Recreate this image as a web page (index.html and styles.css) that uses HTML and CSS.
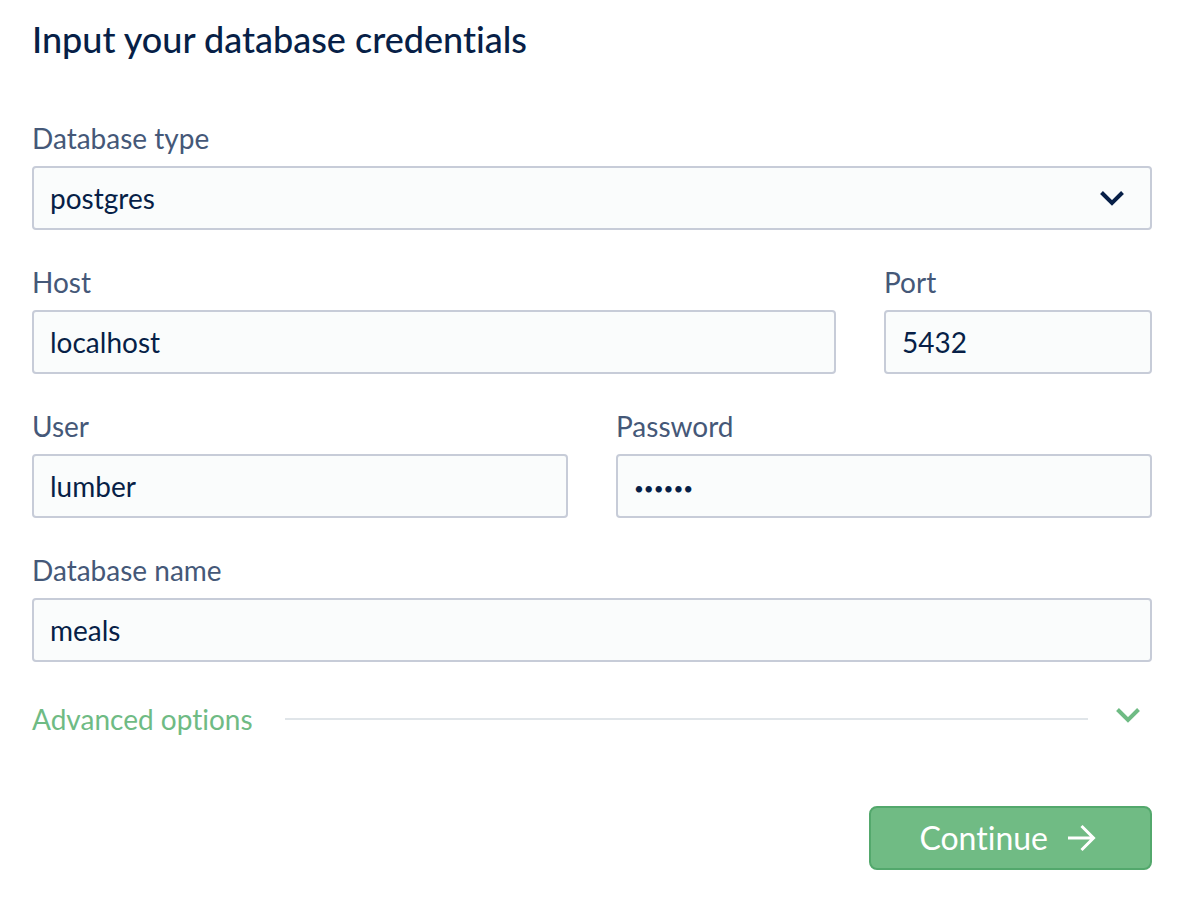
FILE: index.html
```html
<!DOCTYPE html>
<html lang="en">
<head>
<meta charset="utf-8">
<meta name="viewport" content="width=device-width, initial-scale=1">
<title>Database credentials</title>
<link rel="stylesheet" href="styles.css">
</head>
<body>
<main class="page">
  <h1 class="title">Input your database credentials</h1>
  <form class="form">
    <div class="field">
      <label class="label" for="type">Database type</label>
      <div class="select">
        <select class="control" id="type"><option>postgres</option><option>mysql</option></select>
        <svg class="select-icon" width="24" height="16" viewBox="0 0 24 16" aria-hidden="true"><path d="M1.5 2.5 12 13 22.5 2.5"/></svg>
      </div>
    </div>
    <div class="row row-host">
      <div class="field">
        <label class="label" for="host">Host</label>
        <input class="control" id="host" type="text" value="localhost">
      </div>
      <div class="field">
        <label class="label" for="port">Port</label>
        <input class="control" id="port" type="text" inputmode="numeric" value="5432">
      </div>
    </div>
    <div class="row">
      <div class="field">
        <label class="label" for="user">User</label>
        <input class="control" id="user" type="text" value="lumber">
      </div>
      <div class="field">
        <label class="label" for="password">Password</label>
        <input class="control control-password" id="password" type="password" value="lumber">
      </div>
    </div>
    <div class="field">
      <label class="label" for="name">Database name</label>
      <input class="control" id="name" type="text" value="meals">
    </div>
    <button class="advanced" type="button" aria-expanded="false">
      <span>Advanced options</span>
      <span class="line"></span>
      <svg class="advanced-icon" width="24" height="16" viewBox="0 0 24 16" aria-hidden="true"><path d="M1.5 2.5 12 13 22.5 2.5"/></svg>
    </button>
    <button class="continue" type="submit">
      <span>Continue</span>
      <svg class="arrow" width="28" height="28" viewBox="0 0 28 28" aria-hidden="true"><path d="M0 14H26M13.5 2 25.5 14 13.5 26"/></svg>
    </button>
  </form>
</main>
</body>
</html>
```
FILE: styles.css
```css
* {
  box-sizing: border-box;
}

body {
  margin: 0;
  background: #fff;
  color: #071f47;
  font-family: Lato, "Liberation Sans", sans-serif;
  font-size: 28px;
  font-variant-ligatures: none;
}

.page {
  padding: 16px 28px 36px 32px;
}

.title {
  margin: 0 0 60px;
  font-size: 36px;
  font-weight: 500;
  line-height: 46px;
}

.form,
.field {
  display: flex;
  flex-direction: column;
}

.form {
  gap: 36px;
}

.field {
  gap: 12px;
  min-width: 0;
}

.row {
  display: grid;
  grid-template-columns: 1fr 1fr;
  gap: 48px;
}

.row-host {
  grid-template-columns: calc((100% - 48px) * 3 / 4) 1fr;
}

.label {
  color: #455878;
  line-height: 32px;
}

.control {
  width: 100%;
  height: 64px;
  padding: 0 16px;
  border: 2px solid #c7ccd8;
  border-radius: 4px;
  background: #fafcfc;
  color: inherit;
  font: inherit;
  appearance: none;
}

.control-password {
  padding-top: 4px;
  font-size: 17px;
}

.select {
  position: relative;
}

.select-icon {
  position: absolute;
  top: 24px;
  right: 28px;
  pointer-events: none;
}

svg {
  flex: none;
  fill: none;
  stroke: currentColor;
  stroke-width: 4;
}

.advanced {
  display: flex;
  align-items: center;
  gap: 28px;
  padding: 0 12px 0 0;
  border: 0;
  background: none;
  color: #6fbb84;
  font: inherit;
  font-variant-ligatures: none;
  line-height: 42px;
  cursor: pointer;
}

.line {
  flex: 1;
  height: 2px;
  margin-left: 4px;
  background: #e0e5e9;
}

.advanced-icon {
  margin-bottom: 8px;
}

.continue {
  display: flex;
  align-items: center;
  justify-content: center;
  align-self: flex-end;
  gap: 20px;
  height: 64px;
  margin-top: 30px;
  padding: 0 54px 0 48px;
  border: 2px solid #53a86c;
  border-radius: 8px;
  background: #70bb84;
  color: #fff;
  font: inherit;
  font-variant-ligatures: none;
  font-size: 32px;
  line-height: 40px;
  cursor: pointer;
}

.arrow {
  stroke-width: 3;
}
```
